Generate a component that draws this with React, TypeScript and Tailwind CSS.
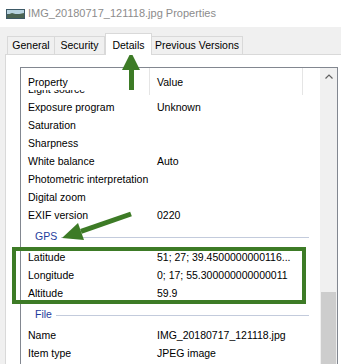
import React from "react";

type Row = { name: string; value?: string };

const topRows: Row[] = [
  { name: "Light source" },
  { name: "Exposure program", value: "Unknown" },
  { name: "Saturation" },
  { name: "Sharpness" },
  { name: "White balance", value: "Auto" },
  { name: "Photometric interpretation" },
  { name: "Digital zoom" },
  { name: "EXIF version", value: "0220" },
];

const gpsRows: Row[] = [
  { name: "Latitude", value: "51; 27; 39.4500000000116..." },
  { name: "Longitude", value: "0; 17; 55.300000000000011" },
  { name: "Altitude", value: "59.9" },
];

const fileRows: Row[] = [
  { name: "Name", value: "IMG_20180717_121118.jpg" },
  { name: "Item type", value: "JPEG image" },
];

function PropRow({ row, first }: { row: Row; first?: boolean }) {
  return (
    <div className={`flex h-[18px] items-center whitespace-nowrap ${first ? "mt-[-9px]" : ""}`}>
      <div className="w-[129px] pl-[7px]">{row.name}</div>
      <div className="pl-[7px]">{row.value}</div>
    </div>
  );
}

function Group({ title }: { title: string }) {
  return (
    <div className="flex h-[24px] items-center pl-[14px]">
      <span className="text-[#1e3c9c]">{title}</span>
      <div className="ml-[4px] mr-[11px] h-px flex-1 bg-[#c3cbdc]" />
    </div>
  );
}

function PictureIcon() {
  return (
    <svg width="19" height="10" viewBox="0 0 19 10">
      <rect x="0" y="0" width="19" height="10" fill="#3d5966" />
      <rect x="1" y="1" width="17" height="4" fill="#b7d3e0" />
      <path d="M1 6 L6 4 L11 5.5 L18 4 L18 9 L1 9 Z" fill="#4b6452" />
    </svg>
  );
}

export default function App() {
  return (
    <div
      className="relative h-[364px] w-[341px] overflow-hidden bg-[#f0f0f0] text-[10.5px] text-black"
      style={{ fontFamily: '"Liberation Sans", Arial, sans-serif' }}
    >
      {/* title bar */}
      <div className="flex h-[27px] items-center bg-white pl-[6px]">
        <PictureIcon />
        <span className="ml-[3px] text-[11px] text-[#8c8c8c]">IMG_20180717_121118.jpg Properties</span>
      </div>

      {/* tabs */}
      <div className="mt-[6px] flex h-[22px] items-end pl-[7px]">
        <div className="flex h-[19px] w-[48px] items-center justify-center border-x border-t border-[#d9d9d9] pb-[1px]">
          General
        </div>
        <div className="flex h-[19px] w-[50px] items-center justify-center border-r border-t border-[#d9d9d9] pb-[1px]">
          Security
        </div>
        <div className="relative z-10 flex h-[22px] w-[47px] items-start justify-center border-x border-t border-[#d9d9d9] bg-white pt-[4px]">
          Details
        </div>
        <div className="flex h-[19px] w-[91px] items-center justify-center border-r border-t border-[#d9d9d9] pb-[1px]">
          Previous Versions
        </div>
      </div>

      {/* panel */}
      <div className="mt-[-1px] ml-[5px] h-[320px] border-l border-t border-[#d9d9d9] bg-white pl-[14px] pt-[12px]">
        <div className="flex h-[320px] w-[318px] border border-[#828790]">
          <div className="flex w-[299px] flex-col">
            {/* header */}
            <div className="flex h-[22px] pt-[7px] leading-[14px]">
              <div className="w-[128px] pl-[7px]">Property</div>
              <div className="h-[27px] w-px -mt-[7px] bg-[#e5e5e5]" />
              <div className="w-[152px] pl-[7px]">Value</div>
              <div className="h-[27px] w-px -mt-[7px] bg-[#e5e5e5]" />
            </div>
            {/* body */}
            <div className="flex-1 overflow-hidden">
              {topRows.map((r, i) => (
                <PropRow key={r.name} row={r} first={i === 0} />
              ))}
              <Group title="GPS" />
              {gpsRows.map((r) => (
                <PropRow key={r.name} row={r} />
              ))}
              <Group title="File" />
              {fileRows.map((r) => (
                <PropRow key={r.name} row={r} />
              ))}
            </div>
          </div>
          {/* scrollbar */}
          <div className="flex w-[17px] flex-col bg-[#f0f0f0]">
            <div className="flex h-[17px] items-center justify-center">
              <svg width="8" height="5" viewBox="0 0 8 5">
                <path d="M0.5 4.5 L4 1 L7.5 4.5" fill="none" stroke="#606060" strokeWidth="1.2" />
              </svg>
            </div>
            <div className="mx-[1px] mt-[207px] flex-1 bg-[#cdcdcd]" />
          </div>
        </div>
      </div>

      {/* annotation */}
      <div className="pointer-events-none absolute left-[12px] top-[247px] h-[57px] w-[294px] border-[4px] border-[#3d7b26]" />
      <svg className="pointer-events-none absolute left-0 top-0" width="341" height="364">
        <polygon points="131,52 122,70 140,70" fill="#3d7b26" />
        <rect x="129" y="69" width="5" height="21" fill="#3d7b26" />
        <line x1="131" y1="214" x2="81" y2="231.4" stroke="#3d7b26" strokeWidth="5" />
        <polygon points="62,238 84,240 78,223" fill="#3d7b26" />
      </svg>
    </div>
  );
}
